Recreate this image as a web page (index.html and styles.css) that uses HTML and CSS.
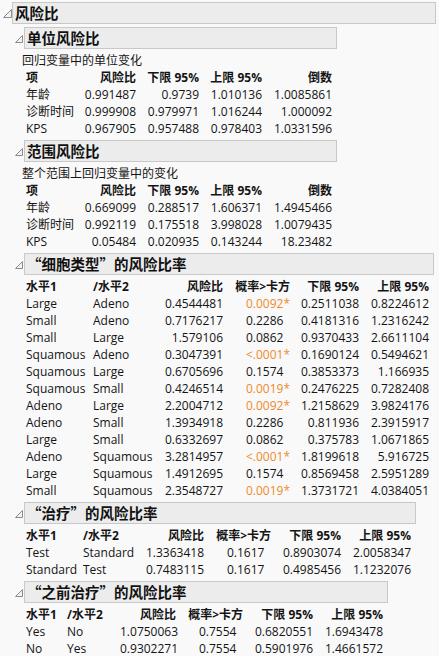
FILE: index.html
```html
<!DOCTYPE html>
<html lang="zh">
<head>
<meta charset="utf-8">
<title>风险比</title>
<link rel="stylesheet" href="styles.css">
</head>
<body>
<div class="outline main">
  <div class="ohead">
    <span class="tri"><svg width="9" height="9" viewBox="0 0 9 9"><polygon points="8.5,0.5 8.5,8.5 0.5,8.5" fill="#f2f2f2" stroke="#8c8c8c" stroke-width="1"/></svg></span>
    <div class="obox">风险比</div>
  </div>
  <div class="obody">

    <div class="outline sub">
      <div class="ohead">
        <span class="tri"><svg width="8" height="8" viewBox="0 0 8 8"><polygon points="7.5,0.5 7.5,7.5 0.5,7.5" fill="#f2f2f2" stroke="#8c8c8c" stroke-width="1"/></svg></span>
        <div class="obox">单位风险比</div>
      </div>
      <div class="content">
        <div class="desc">回归变量中的单位变化</div>
        <div class="grid g1">
          <div class="h c1">项</div><div class="h r">风险比</div><div class="h r">下限 95%</div><div class="h r">上限 95%</div><div class="h r">倒数</div>
          <div class="c1">年龄</div><div class="r">0.991487</div><div class="r">0.9739</div><div class="r">1.010136</div><div class="r">1.0085861</div>
          <div class="c1">诊断时间</div><div class="r">0.999908</div><div class="r">0.979971</div><div class="r">1.016244</div><div class="r">1.000092</div>
          <div class="c1">KPS</div><div class="r">0.967905</div><div class="r">0.957488</div><div class="r">0.978403</div><div class="r">1.0331596</div>
        </div>
      </div>
    </div>

    <div class="outline sub">
      <div class="ohead">
        <span class="tri"><svg width="8" height="8" viewBox="0 0 8 8"><polygon points="7.5,0.5 7.5,7.5 0.5,7.5" fill="#f2f2f2" stroke="#8c8c8c" stroke-width="1"/></svg></span>
        <div class="obox">范围风险比</div>
      </div>
      <div class="content">
        <div class="desc">整个范围上回归变量中的变化</div>
        <div class="grid g1">
          <div class="h c1">项</div><div class="h r">风险比</div><div class="h r">下限 95%</div><div class="h r">上限 95%</div><div class="h r">倒数</div>
          <div class="c1">年龄</div><div class="r">0.669099</div><div class="r">0.288517</div><div class="r">1.606371</div><div class="r">1.4945466</div>
          <div class="c1">诊断时间</div><div class="r">0.992119</div><div class="r">0.175518</div><div class="r">3.998028</div><div class="r">1.0079435</div>
          <div class="c1">KPS</div><div class="r">0.05484</div><div class="r">0.020935</div><div class="r">0.143244</div><div class="r">18.23482</div>
        </div>
      </div>
    </div>

    <div class="outline sub">
      <div class="ohead">
        <span class="tri"><svg width="8" height="8" viewBox="0 0 8 8"><polygon points="7.5,0.5 7.5,7.5 0.5,7.5" fill="#f2f2f2" stroke="#8c8c8c" stroke-width="1"/></svg></span>
        <div class="obox">“细胞类型”的风险比率</div>
      </div>
      <div class="content">
        <div class="grid g3">
          <div class="h c1">水平1</div><div class="h">/水平2</div><div class="h r">风险比</div><div class="h r">概率&gt;卡方</div><div class="h r">下限 95%</div><div class="h r">上限 95%</div>
          <div class="c1">Large</div><div>Adeno</div><div class="r">0.4544481</div><div class="r sig">0.0092*</div><div class="r">0.2511038</div><div class="r">0.8224612</div>
          <div class="c1">Small</div><div>Adeno</div><div class="r">0.7176217</div><div class="r">0.2286<span class="ph">*</span></div><div class="r">0.4181316</div><div class="r">1.2316242</div>
          <div class="c1">Small</div><div>Large</div><div class="r">1.579106</div><div class="r">0.0862<span class="ph">*</span></div><div class="r">0.9370433</div><div class="r">2.6611104</div>
          <div class="c1">Squamous</div><div>Adeno</div><div class="r">0.3047391</div><div class="r sig">&lt;.0001*</div><div class="r">0.1690124</div><div class="r">0.5494621</div>
          <div class="c1">Squamous</div><div>Large</div><div class="r">0.6705696</div><div class="r">0.1574<span class="ph">*</span></div><div class="r">0.3853373</div><div class="r">1.166935</div>
          <div class="c1">Squamous</div><div>Small</div><div class="r">0.4246514</div><div class="r sig">0.0019*</div><div class="r">0.2476225</div><div class="r">0.7282408</div>
          <div class="c1">Adeno</div><div>Large</div><div class="r">2.2004712</div><div class="r sig">0.0092*</div><div class="r">1.2158629</div><div class="r">3.9824176</div>
          <div class="c1">Adeno</div><div>Small</div><div class="r">1.3934918</div><div class="r">0.2286<span class="ph">*</span></div><div class="r">0.811936</div><div class="r">2.3915917</div>
          <div class="c1">Large</div><div>Small</div><div class="r">0.6332697</div><div class="r">0.0862<span class="ph">*</span></div><div class="r">0.375783</div><div class="r">1.0671865</div>
          <div class="c1">Adeno</div><div>Squamous</div><div class="r">3.2814957</div><div class="r sig">&lt;.0001*</div><div class="r">1.8199618</div><div class="r">5.916725</div>
          <div class="c1">Large</div><div>Squamous</div><div class="r">1.4912695</div><div class="r">0.1574<span class="ph">*</span></div><div class="r">0.8569458</div><div class="r">2.5951289</div>
          <div class="c1">Small</div><div>Squamous</div><div class="r">2.3548727</div><div class="r sig">0.0019*</div><div class="r">1.3731721</div><div class="r">4.0384051</div>
        </div>
      </div>
    </div>

    <div class="outline sub">
      <div class="ohead">
        <span class="tri"><svg width="8" height="8" viewBox="0 0 8 8"><polygon points="7.5,0.5 7.5,7.5 0.5,7.5" fill="#f2f2f2" stroke="#8c8c8c" stroke-width="1"/></svg></span>
        <div class="obox">“治疗”的风险比率</div>
      </div>
      <div class="content">
        <div class="grid g4">
          <div class="h c1">水平1</div><div class="h">/水平2</div><div class="h r">风险比</div><div class="h r">概率&gt;卡方</div><div class="h r">下限 95%</div><div class="h r">上限 95%</div>
          <div class="c1">Test</div><div>Standard</div><div class="r">1.3363418</div><div class="r">0.1617<span class="ph">*</span></div><div class="r">0.8903074</div><div class="r">2.0058347</div>
          <div class="c1">Standard</div><div>Test</div><div class="r">0.7483115</div><div class="r">0.1617<span class="ph">*</span></div><div class="r">0.4985456</div><div class="r">1.1232076</div>
        </div>
      </div>
    </div>

    <div class="outline sub">
      <div class="ohead">
        <span class="tri"><svg width="8" height="8" viewBox="0 0 8 8"><polygon points="7.5,0.5 7.5,7.5 0.5,7.5" fill="#f2f2f2" stroke="#8c8c8c" stroke-width="1"/></svg></span>
        <div class="obox">“之前治疗”的风险比率</div>
      </div>
      <div class="content">
        <div class="grid g5">
          <div class="h c1">水平1</div><div class="h">/水平2</div><div class="h r">风险比</div><div class="h r">概率&gt;卡方</div><div class="h r">下限 95%</div><div class="h r">上限 95%</div>
          <div class="c1">Yes</div><div>No</div><div class="r">1.0750063</div><div class="r">0.7554<span class="ph">*</span></div><div class="r">0.6820551</div><div class="r">1.6943478</div>
          <div class="c1">No</div><div>Yes</div><div class="r">0.9302271</div><div class="r">0.7554<span class="ph">*</span></div><div class="r">0.5901976</div><div class="r">1.4661572</div>
        </div>
      </div>
    </div>

  </div>
</div>
</body>
</html>
```

FILE: styles.css
```css
* { box-sizing: border-box; }

html, body {
  margin: 0;
  background: #f9f9f9;
}

body {
  padding-top: 2px;
  font-family: "Open Sans", "Noto Sans CJK SC", sans-serif;
  font-size: 12px;
  color: #141414;
}

.outline {
  width: fit-content;
}

.ohead {
  display: flex;
  align-items: center;
  margin-bottom: 3px;
}

.tri {
  width: 12px;
  flex: none;
  display: flex;
  align-items: center;
  padding-left: 3px;
  padding-top: 1px;
}

.tri svg { display: block; }

.obox {
  flex: 1;
  height: 22px;
  background: #ececec;
  border: 1px solid #c8c8c8;
  padding-left: 2px;
  font-family: "Noto Sans CJK SC", sans-serif;
  font-weight: bold;
  font-size: 14.5px;
  line-height: 20px;
  color: #111;
  white-space: nowrap;
}

.obody {
  padding-left: 12px;
  padding-right: 2px;
}

.sub {
  margin-bottom: 3px;
}

.content {
  padding-left: 10px;
  padding-right: 5px;
}

.desc {
  height: 17px;
  line-height: 17px;
  white-space: nowrap;
}

.grid {
  display: grid;
  grid-auto-rows: 17px;
  line-height: 17px;
  white-space: nowrap;
}

.g1 { grid-template-columns: 54px 60px 63px 63px 70px; }
.g3 { grid-template-columns: 71px 67px 63px 67px 69px 70px; }
.g4 { grid-template-columns: 61px 62px 59px 67px 70px 70px; }
.g5 { grid-template-columns: 45px 53px 56px 67px 70px 70px; }

.c1 { padding-left: 4px; }
.r { text-align: right; }
.h { font-weight: bold; }

.sig { color: #ee8a2c; }
.ph { visibility: hidden; }
```
